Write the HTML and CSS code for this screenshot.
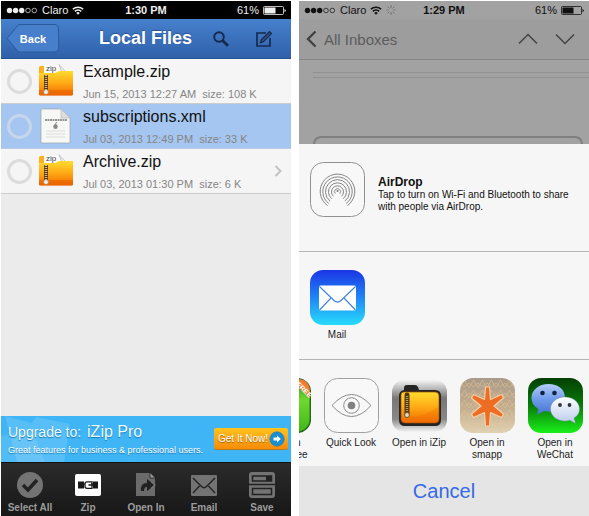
FILE: index.html
```html
<!DOCTYPE html>
<html lang="en">
<head>
<meta charset="utf-8">
<title>Local Files</title>
<link rel="stylesheet" href="styles.css">
</head>
<body>
<svg class="defs" width="0" height="0" aria-hidden="true">
  <defs>
    <linearGradient id="folder" x1="0" y1="0" x2="0" y2="1"><stop offset="0" stop-color="#ffdc2e"/><stop offset=".5" stop-color="#ffa814"/><stop offset="1" stop-color="#f06a00"/></linearGradient>
    <linearGradient id="chrome" x1="0" y1="0" x2="0" y2="1"><stop offset="0" stop-color="#f4f4f4"/><stop offset=".35" stop-color="#777"/><stop offset=".75" stop-color="#888"/><stop offset="1" stop-color="#f4f4f4"/></linearGradient>
    <linearGradient id="mail" x1="0" y1="0" x2="0" y2="1"><stop offset="0" stop-color="#1b35e5"/><stop offset=".5" stop-color="#1f86f6"/><stop offset="1" stop-color="#27dcfb"/></linearGradient>
    <linearGradient id="sand" x1="0" y1="0" x2="0" y2="1"><stop offset="0" stop-color="#a99a8a"/><stop offset=".55" stop-color="#c4ae8f"/><stop offset="1" stop-color="#e0d2b4"/></linearGradient>
    <linearGradient id="green" x1="0" y1="0" x2="0" y2="1"><stop offset="0" stop-color="#053f05"/><stop offset=".5" stop-color="#087a08"/><stop offset="1" stop-color="#19f019"/></linearGradient>
    <linearGradient id="blueball" x1="0" y1="0" x2="0" y2="1"><stop offset="0" stop-color="#b5cdf8"/><stop offset=".5" stop-color="#6e9aea"/><stop offset="1" stop-color="#4674cf"/></linearGradient>
    <linearGradient id="whiteball" x1="0" y1="0" x2="0" y2="1"><stop offset="0" stop-color="#fff"/><stop offset="1" stop-color="#b9cbec"/></linearGradient>
    <linearGradient id="lime" x1="0" y1="0" x2="0" y2="1"><stop offset="0" stop-color="#3c8c1c"/><stop offset=".4" stop-color="#6fd92e"/><stop offset="1" stop-color="#3fb51a"/></linearGradient>
    <pattern id="weave" width="9" height="10" patternUnits="userSpaceOnUse"><path d="M0 10 4.500 2 9 10M0 5 4.500 9 9 5" fill="none" stroke="#e5c48f" stroke-width=".7" opacity=".75"/></pattern>
    <symbol id="signal" viewBox="0 0 32 7"><g fill="currentColor"><circle cx="3.500" cy="3.500" r="2.700"/><circle cx="9.600" cy="3.500" r="2.700"/><circle cx="15.700" cy="3.500" r="2.700"/></g><g fill="none" stroke="currentColor" stroke-width=".7"><circle cx="22" cy="3.500" r="2.300"/><circle cx="28.300" cy="3.500" r="2.300"/></g></symbol>
    <symbol id="wifi" viewBox="0 0 12 9"><path d="M.8 3.300a7.400 7.400 0 0 1 10.400 0M2.800 5.400a4.500 4.500 0 0 1 6.400 0" fill="none" stroke="currentColor" stroke-width="1.500"/><path d="M6 8.800 4.200 6.900a2.600 2.600 0 0 1 3.600 0z" fill="currentColor"/></symbol>
    <symbol id="battery" viewBox="0 0 23 9"><rect x=".5" y=".5" width="20" height="8" rx="1" fill="none" stroke="currentColor" stroke-width=".8"/><path d="M1.500 1.500h11v6h-11z" fill="currentColor"/><path d="M21.500 3v3q1.300-.5 1.300-1.500T21.500 3z" fill="currentColor"/></symbol>
    <symbol id="zipfolder" viewBox="0 0 36 36"><path d="M1 4.500q0-1.500 1.500-1.500H7v8H1z" fill="#fbb21c"/><path d="M6 2h17l5 5v8H6z" fill="#fafafa"/><path d="M21 1.500 29 10h-5z" fill="#e9e9e9" stroke="#bbb" stroke-width=".8"/><path d="M1 10h15q2 0 3-1t3-1h13v23q0 1.500-1.500 1.500h-31Q1 32.500 1 31z" fill="url(#folder)"/><path d="M1 27h34v4q0 1.500-1.500 1.500h-31Q1 32.500 1 31z" fill="#e65b00" opacity=".5"/><path d="M8 12v17" stroke="#5b3b16" stroke-width="4"/><path d="M8 12v16" stroke="#d2bd92" stroke-width="2.500" stroke-dasharray="1 1"/><circle cx="8" cy="29" r="2.300" fill="#eee" stroke="#998" stroke-width=".5"/><text class="zip-tag" x="8" y="8">zip</text></symbol>
    <symbol id="document" viewBox="0 0 36 36"><path d="M3 1h20l9 9v25H3z" fill="#f7f7f5" stroke="#9aa3b0" stroke-width=".7"/><path d="M23 1v9h9z" fill="#dedede" stroke="#b7b7b7" stroke-width=".6"/><path d="M7 12h22" stroke="#777" stroke-width="1.500" stroke-dasharray="2 .5"/><ellipse cx="17.500" cy="18.500" rx="2.200" ry="2.600" fill="#888"/><path d="M17.500 16q.2-1.500 1.400-1.800" stroke="#888" stroke-width=".8"/><path d="M8 23h19M8 26h19M8 29h19" stroke="#ddd"/></symbol>
  </defs>
</svg>

<main class="screens">
  <section class="phone files">
    <div class="status">
      <div class="status-side"><svg class="signal"><use href="#signal"/></svg><span>Claro</span><svg class="wifi"><use href="#wifi"/></svg></div>
      <b>1:30 PM</b>
      <div class="status-side end"><span>61%</span><svg class="battery"><use href="#battery"/></svg></div>
    </div>
    <header class="navbar">
      <button class="back" type="button">
        <svg class="back-shape" viewBox="0 0 52 29"><path d="M13 .5h34q4.500 0 4.500 4.500v18.500q0 4.500-4.500 4.500H13q-1.500 0-2.500-1.200L1 15.500q-.8-1 0-2L10.500 1.700Q11.500.5 13 .5z" fill="#477fca" stroke="#2b5a9f"/></svg>
        <span>Back</span>
      </button>
      <h1>Local Files</h1>
      <button class="nav-icon" type="button" aria-label="Search"><svg viewBox="0 0 18 18"><circle cx="7" cy="7" r="4.800" fill="none" stroke="#17294d" stroke-width="2"/><path d="m10.500 10.500 5.500 5.300" stroke="#17294d" stroke-width="2.800"/></svg></button>
      <button class="nav-icon" type="button" aria-label="Edit"><svg viewBox="0 0 18 18"><path d="M11 3H2v13h13V8" fill="none" stroke="#17294d" stroke-width="1.700"/><path d="m5.500 12.800.8-3L14.500 1.500l2 2-8.200 8.300z" fill="#2d5185" stroke="#17294d" stroke-width="1.200"/></svg></button>
    </header>
    <ul class="file-list">
      <li class="file">
        <input type="checkbox" aria-label="Select Example.zip">
        <svg class="file-icon"><use href="#zipfolder"/></svg>
        <div class="file-text"><h2>Example.zip</h2><p>Jun 15, 2013 12:27 AM&nbsp; size: 108 K</p></div>
      </li>
      <li class="file selected">
        <input type="checkbox" aria-label="Select subscriptions.xml">
        <svg class="file-icon"><use href="#document"/></svg>
        <div class="file-text"><h2>subscriptions.xml</h2><p>Jul 03, 2013 12:49 PM&nbsp; size: 33 K</p></div>
      </li>
      <li class="file">
        <input type="checkbox" aria-label="Select Archive.zip">
        <svg class="file-icon"><use href="#zipfolder"/></svg>
        <div class="file-text"><h2>Archive.zip</h2><p>Jul 03, 2013 01:30 PM&nbsp; size: 6 K</p></div>
        <svg class="chevron" viewBox="0 0 8 12"><path d="m1.500 1 5 5-5 5" fill="none" stroke="#c3c3c3" stroke-width="2"/></svg>
      </li>
    </ul>
    <aside class="banner">
      <svg class="banner-art" viewBox="0 0 72 46"><path d="m4 0 27 7 4-6 34 7-6 38H16z" fill="#fff" opacity=".13"/><path d="m0 20 30-8 14 34H0z" fill="#fff" opacity=".1"/></svg>
      <div class="banner-text">
        <p class="offer">Upgrade to: <strong>iZip Pro</strong></p>
        <p class="detail">Great features for business &amp; professional users.</p>
      </div>
      <button class="get" type="button">Get It Now!<svg viewBox="0 0 16 16"><circle cx="8" cy="8" r="7.200" fill="#168fd4" stroke="#3a7ca0" stroke-width=".7"/><path d="M4.500 6.600H8V4.500L11.800 8 8 11.500V9.400H4.500z" fill="#fff"/></svg></button>
    </aside>
    <nav class="toolbar">
      <button type="button"><svg viewBox="0 0 28 28"><circle cx="14" cy="14" r="13" fill="#737373"/><path d="m7 14 5 5L21 9" fill="none" stroke="#222" stroke-width="3.500"/></svg>Select All</button>
      <button type="button"><svg viewBox="0 0 28 28"><rect x="1" y="3" width="26" height="22" rx="2" fill="#fff"/><path d="M4 10.500h6v7H4zM19 10.500h5v7h-5z" fill="#181818"/><path d="M9 13h2M17 13h3" stroke="#181818" stroke-width="1.200"/><path d="M18 10.800h-5q-2 0-2 2v2.500q0 2 2 2h5zM14.500 14H19" fill="none" stroke="#181818" stroke-width="1.300"/></svg>Zip</button>
      <button type="button"><svg viewBox="0 0 28 28"><path d="M4 2h14l5 5v18H4z" fill="#6b6b6b"/><path d="M18 2v5h5" fill="#999" stroke="#222" stroke-width=".8"/><path d="M9 20q-1-8 6-8V8l8 6-8 6v-4q-3-.3-3 4z" fill="#222"/><path d="M19 10.500 23 14l-4 3.500" fill="none" stroke="#777" stroke-width="1.300"/></svg>Open In</button>
      <button type="button"><svg viewBox="0 0 28 28"><rect x="1" y="4" width="26" height="21" rx="1" fill="#737373"/><path d="m3 7 8.500 8.500q2.500 2.500 5 0L25 7M3 22l6.500-7M25 22l-6.500-7" fill="none" stroke="#252525" stroke-width="1.500"/></svg>Email</button>
      <button type="button"><svg viewBox="0 0 28 28"><rect x="1" y="1" width="26" height="26" rx="3" fill="#737373"/><path d="M1 13.500h26" stroke="#222" stroke-width="1.500"/><path d="M4.500 5h19v5h-19zM4.500 17.500h19v6h-19z" fill="#737373" stroke="#222" stroke-width="1.500"/><path d="M18 5h5v5h-5z" fill="#222"/></svg>Save</button>
    </nav>
  </section>

  <section class="phone share">
    <div class="dimmed">
      <div class="status">
        <div class="status-side"><svg class="signal"><use href="#signal"/></svg><span>Claro</span><svg class="wifi"><use href="#wifi"/></svg><svg class="spinner" viewBox="0 0 10 10"><g stroke="#707070"><path d="M5 0v3M5 7v3"/><path d="M0 5h3M7 5h3" opacity=".6"/><path d="m1.500 1.500 2 2M6.500 6.500l2 2M8.500 1.500l-2 2M3.500 6.500l-2 2" opacity=".8"/></g></svg></div>
        <b>1:29 PM</b>
        <div class="status-side end"><span>61%</span><svg class="battery"><use href="#battery"/></svg></div>
      </div>
      <header class="mailbar">
        <a href="#inboxes"><svg class="back-arrow" viewBox="0 0 11 18"><path d="M9.500 1.500 2 9l7.500 7.500" fill="none" stroke="#404040" stroke-width="2.300"/></svg>All Inboxes</a>
        <button type="button" aria-label="Previous message"><svg viewBox="0 0 20 12"><path d="m1 10.500 9-9 9 9" fill="none" stroke="#444" stroke-width="1.500"/></svg></button>
        <button type="button" aria-label="Next message"><svg viewBox="0 0 20 12"><path d="m1 1.500 9 9 9-9" fill="none" stroke="#444" stroke-width="1.500"/></svg></button>
      </header>
      <div class="message"><div class="message-line"></div><div class="message-box"></div></div>
    </div>
    <div class="sheet">
      <div class="airdrop">
        <svg class="app-icon" viewBox="0 0 55 55"><rect x=".5" y=".5" width="54" height="54" rx="13" fill="#f8f8f8" stroke="#909090"/><g fill="none" stroke="#858585"><path d="M25.200 31.600a3 3 0 1 1 4.600 0M23.400 34.200a6 6 0 1 1 8.200 0"/><path d="M21.700 36.700a9 9 0 1 1 11.600 0M20.100 39.100a12 12 0 1 1 14.800 0M18.800 41.500a14.700 14.700 0 1 1 17.400 0M17.500 43.500a17.300 17.300 0 1 1 20 0"/></g><circle cx="27.500" cy="29" r="1" fill="#777"/></svg>
        <div><h2>AirDrop</h2><p>Tap to turn on Wi-Fi and Bluetooth to share with people via AirDrop.</p></div>
      </div>
      <div class="mail-row">
        <button class="app" type="button"><svg class="app-icon" viewBox="0 0 55 55"><rect width="55" height="55" rx="13" fill="url(#mail)"/><rect x="9" y="15.500" width="37" height="25" rx="1.500" fill="#fff"/><path d="M9.500 16.500 24 30.500q3.500 3.300 7 0l14.500-14M9.500 40 21 28M45.500 40 34 28" fill="none" stroke="#3d82df" stroke-width="1.100"/></svg>Mail</button>
      </div>
      <div class="apps">
        <button class="app" type="button"><svg class="app-icon" viewBox="0 0 55 55"><rect x=".7" y=".7" width="53.600" height="53.600" rx="13" fill="url(#lime)" stroke="#256b17" stroke-width="1.500"/><path d="M34 1h8q12 1 12 13v6z" fill="#f17b35"/><text class="ribbon" x="40" y="7" transform="rotate(45 40 7)">FREE</text></svg>Open in<br>Office Free</button>
        <button class="app" type="button"><svg class="app-icon" viewBox="0 0 55 55"><rect x=".5" y=".5" width="54" height="54" rx="13" fill="#f8f8f8" stroke="#a0a0a0"/><path d="M8 27.500q19.500-22 39 0-19.500 22-39 0z" fill="none" stroke="#8a8a8a"/><circle cx="27.500" cy="27.500" r="7.800" fill="none" stroke="#8a8a8a"/><circle cx="27.500" cy="27.500" r="3.800" fill="#808080"/></svg>Quick Look</button>
        <button class="app" type="button"><svg class="app-icon" viewBox="0 0 55 55"><rect y="2" width="55" height="52" rx="12" fill="url(#chrome)"/><path d="M12 12v-2q0-3 3-3h8q2 0 3 2l1 3h16q6 0 6 6v24q0 6-6 6H13q-6 0-6-6V18q0-5 5-6z" fill="#242424"/><path d="M12 14h31q4 0 4 4v23q0 4-4 4H13q-4 0-4-4V17q0-3 3-3z" fill="url(#folder)" stroke="#9c4900" stroke-width=".7"/><path d="M10 39q20 2 36-10v12q0 4-4 4H14q-4 0-4-4z" fill="#f06a00" opacity=".3"/><path d="M15 17v18" stroke="#513515" stroke-width="5" stroke-linecap="round"/><path d="M15 18v17" stroke="#b89c6e" stroke-width="2.500" stroke-dasharray="1 1"/><circle cx="15" cy="37" r="2.500" fill="#e3d9c4" stroke="#6b522b"/></svg>Open in iZip</button>
        <button class="app" type="button"><svg class="app-icon" viewBox="0 0 55 55"><rect width="55" height="55" rx="13" fill="url(#sand)"/><rect width="55" height="55" rx="13" fill="url(#weave)"/><path d="m25.500 9h4l1 12.500 11-5 2 3.500-9.500 8 9.500 8-2 3.500-11-5-1 13.500h-4l-1-13.500-11 5-2-3.500 9.500-8-9.500-8 2-3.500 11 5z" fill="#ed6d25" stroke="#f7d0a6" stroke-width="1.200" stroke-linejoin="round"/></svg>Open in<br>smapp</button>
        <button class="app" type="button"><svg class="app-icon" viewBox="0 0 55 55"><rect width="55" height="55" rx="13" fill="url(#green)"/><path d="M20.500 6C11 6 3.500 12 3.500 19.500c0 5 2.500 9 7 11.500L9 37l7-4c13 3 21-4 21-13S30 6 20.500 6z" fill="url(#blueball)"/><circle cx="14.500" cy="15" r="2.300" fill="#102040"/><circle cx="26.500" cy="15" r="2.300" fill="#102040"/><path d="M37 19c-8 0-14.500 5-14.500 12S29 43 37 43q3 0 5-.7L47.500 45.500 46 40q5.500-3 5.500-9C51.500 24 45 19 37 19z" fill="url(#whiteball)" stroke="#789" stroke-width=".4"/><circle cx="32" cy="27" r="1.900" fill="#333"/><circle cx="41.500" cy="27" r="1.900" fill="#333"/></svg>Open in<br>WeChat</button>
      </div>
      <button class="cancel" type="button">Cancel</button>
    </div>
  </section>
</main>
</body>
</html>
```

FILE: styles.css
```css
* { box-sizing: border-box; }
body { margin: 0; background: #fff; font-family: "Liberation Sans", Arial, sans-serif; color: #111; }
h1, h2, p, ul { margin: 0; padding: 0; font-weight: normal; }
button { margin: 0; padding: 0; border: 0; background: none; color: inherit; font-family: inherit; }
svg { display: block; flex: none; }
.defs { position: absolute; }

.screens { display: grid; grid-template-columns: 1fr 1fr; gap: 8px; min-height: 100vh; padding: 1px 0 0 1px; }
.phone { display: flex; flex-direction: column; min-width: 0; overflow: hidden; }

.status { display: grid; grid-template-columns: 1fr auto 1fr; align-items: center; height: 18px; padding: 0 5px; font-size: 11px; }
.status-side { display: flex; align-items: center; gap: 4px; }
.end { justify-content: flex-end; }
.signal { width: 32px; height: 7px; }
.wifi { width: 12px; height: 9px; }
.battery { width: 23px; height: 9px; }
.spinner { width: 10px; height: 10px; }

.files { background: #ebebeb; }
.files .status { background: #000; color: #eee; }
.navbar { display: flex; align-items: center; height: 40px; padding: 0 18px 0 6px; background: linear-gradient(#4680cc, #2f61aa); border-bottom: 1px solid #26528f; color: #fff; }
.back { display: grid; width: 52px; height: 29px; color: #fff; font-size: 11px; font-weight: bold; }
.back > * { grid-area: 1 / 1; align-self: center; }
.back-shape { width: 52px; height: 29px; }
.navbar h1 { flex: 1; padding-left: 40px; font-size: 18px; font-weight: bold; white-space: nowrap; text-shadow: 0 -1px 1px #2b5590; }
.nav-icon { margin-left: 25px; }
.nav-icon svg { width: 18px; height: 18px; }
.navbar h1 + .nav-icon { margin-left: 0; }

.file-list { flex: 1; list-style: none; }
.file { display: flex; align-items: center; height: 45px; padding: 0 9px 0 6px; background: #f5f5f5; border-bottom: 1px solid #ccc; }
.selected { background: #a5c6f0; border-color: #b9cbe2; }
.file input { appearance: none; flex: none; width: 25px; height: 25px; margin: 0; border: 3px solid #dcdcdc; border-radius: 50%; }
.selected input { border-color: #c7d6eb; }
.file-icon { width: 36px; height: 36px; margin: 0 9px 0 6px; }
.file-text { flex: 1; padding-top: 4px; white-space: nowrap; }
.file h2 { font-size: 16px; line-height: 22px; }
.file p { font-size: 11px; line-height: 22px; color: #858585; }
.chevron { width: 8px; height: 12px; }
.zip-tag { font-size: 8px; fill: #444; }

.banner { position: relative; display: flex; align-items: center; justify-content: space-between; height: 46px; padding-right: 3px; background: #3fb5f6; color: #fff; }
.banner-art { position: absolute; left: 0; top: 0; width: 72px; height: 46px; }
.banner-text { position: relative; padding-left: 7px; white-space: nowrap; text-shadow: 0 1px 1px #1779b0; }
.offer { font-size: 14px; line-height: 22px; color: #effaff; }
.offer strong { font-size: 16px; font-weight: normal; padding-left: 2px; }
.detail { font-size: 9px; line-height: 14px; }
.get { position: relative; display: flex; align-items: center; justify-content: space-between; width: 74px; height: 22px; padding: 0 3px 0 4px; border-radius: 2px; background: linear-gradient(#ffc31f, #f68b08); border-bottom: 1px solid #b9781a; color: #fff; font-size: 10px; white-space: nowrap; text-shadow: 0 1px 1px #9a5a00; }
.get svg { width: 16px; height: 16px; }

.toolbar { display: grid; grid-template-columns: repeat(5, 1fr); height: 54px; padding-top: 8px; background: linear-gradient(#2b2b2b, #171717); border-top: 1px solid #111; }
.toolbar button { display: flex; flex-direction: column; align-items: center; gap: 2px; color: #9c9c9c; font-size: 10px; line-height: 14px; font-weight: bold; }
.toolbar svg { width: 28px; height: 28px; }

.share { background: #f6f6f6; }
.dimmed { display: flex; flex-direction: column; flex: 1; background: #a2a2a2; }
.mailbar { display: flex; align-items: center; gap: 17px; height: 41px; padding: 0 14px 0 7px; background: #9d9d9d; border-bottom: 1px solid #858585; }
.mailbar a { display: flex; align-items: center; gap: 7px; flex: 1; color: #5c5c5c; font-size: 15px; text-decoration: none; }
.back-arrow { width: 11px; height: 18px; }
.mailbar button svg { width: 20px; height: 12px; }
.message { display: flex; flex-direction: column; justify-content: space-between; flex: 1; padding: 12px 0 0 14px; }
.message-line { height: 6px; border: solid #919191; border-width: 1px 0; }
.message-box { height: 8px; margin-right: 6px; border: 2px solid #808080; border-bottom: 0; border-radius: 8px 8px 0 0; }

.airdrop, .mail-row { height: 108px; border-bottom: 1px solid #b5b5b5; }
.airdrop { display: flex; align-items: flex-start; gap: 13px; padding: 18px 14px 0 11px; }
.airdrop > div { padding-top: 13px; }
.airdrop h2 { font-size: 12px; line-height: 14px; font-weight: bold; }
.airdrop p { font-size: 10px; line-height: 12px; }
.app-icon { width: 55px; height: 55px; }
.mail-row { padding: 18px 0 0 4px; }
.app { display: flex; flex-direction: column; align-items: center; flex: none; width: 68px; color: #222; font-size: 10px; line-height: 12px; }
.app .app-icon { margin-bottom: 4px; }
.apps { display: flex; justify-content: flex-end; align-items: flex-start; height: 106px; padding-top: 18px; overflow: hidden; }
.ribbon { font-size: 7px; font-weight: bold; fill: #fff; }
.cancel { display: block; width: 100%; height: 50px; background: #e5e5e5; color: #3569e8; font-size: 20px; text-align: center; }
```
